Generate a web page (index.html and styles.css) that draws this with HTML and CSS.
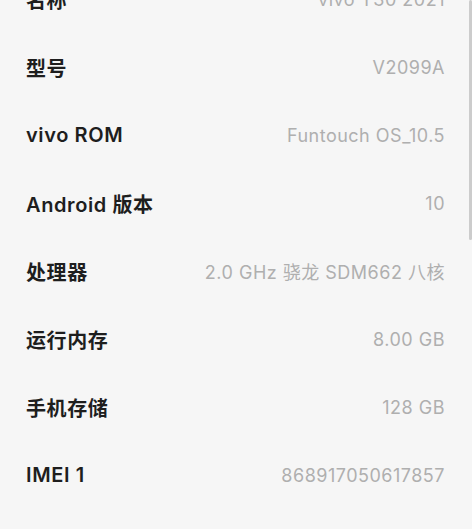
FILE: index.html
```html
<!DOCTYPE html>
<html>
<head>
	<meta charset="utf-8">
	<title>关于手机</title>
	<link rel="stylesheet" href="styles.css">
</head>
<body>
	<div id="info">
		<div class="linha"><span class="rotulo">名称</span><span class="valor">vivo Y30 2021</span></div>
		<div class="linha"><span class="rotulo">型号</span><span class="valor">V2099A</span></div>
		<div class="linha"><span class="rotulo">vivo ROM</span><span class="valor">Funtouch OS_10.5</span></div>
		<div class="linha"><span class="rotulo">Android 版本</span><span class="valor">10</span></div>
		<div class="linha"><span class="rotulo">处理器</span><span class="valor">2.0 GHz 骁龙 SDM662 八核</span></div>
		<div class="linha"><span class="rotulo">运行内存</span><span class="valor">8.00 GB</span></div>
		<div class="linha"><span class="rotulo">手机存储</span><span class="valor">128 GB</span></div>
		<div class="linha"><span class="rotulo">IMEI 1</span><span class="valor">868917050617857</span></div>
	</div>
	<div id="barra"></div>
</body>
</html>
```

FILE: styles.css
```css
body{
	margin: 0;
	height: 529px;
	overflow: hidden;
	background-color: rgb(246, 246, 246);
	font-family: "Inter", "Noto Sans CJK SC", sans-serif;
}
#info{
	margin-top: -35px;
}
.linha{
	height: 68px;
	display: flex;
	align-items: center;
	justify-content: space-between;
	padding: 0 27px 0 26px;
}
.rotulo{
	font-size: 20px;
	font-weight: 600;
	color: rgb(30, 30, 30);
	letter-spacing: 0.6px;
}
.valor{
	font-size: 18px;
	color: rgb(175, 175, 175);
	letter-spacing: 0.5px;
}
#barra{
	position: absolute;
	top: 0;
	right: 0;
	width: 3px;
	height: 240px;
	background-color: rgb(204, 204, 204);
	border-radius: 2px;
}
```
